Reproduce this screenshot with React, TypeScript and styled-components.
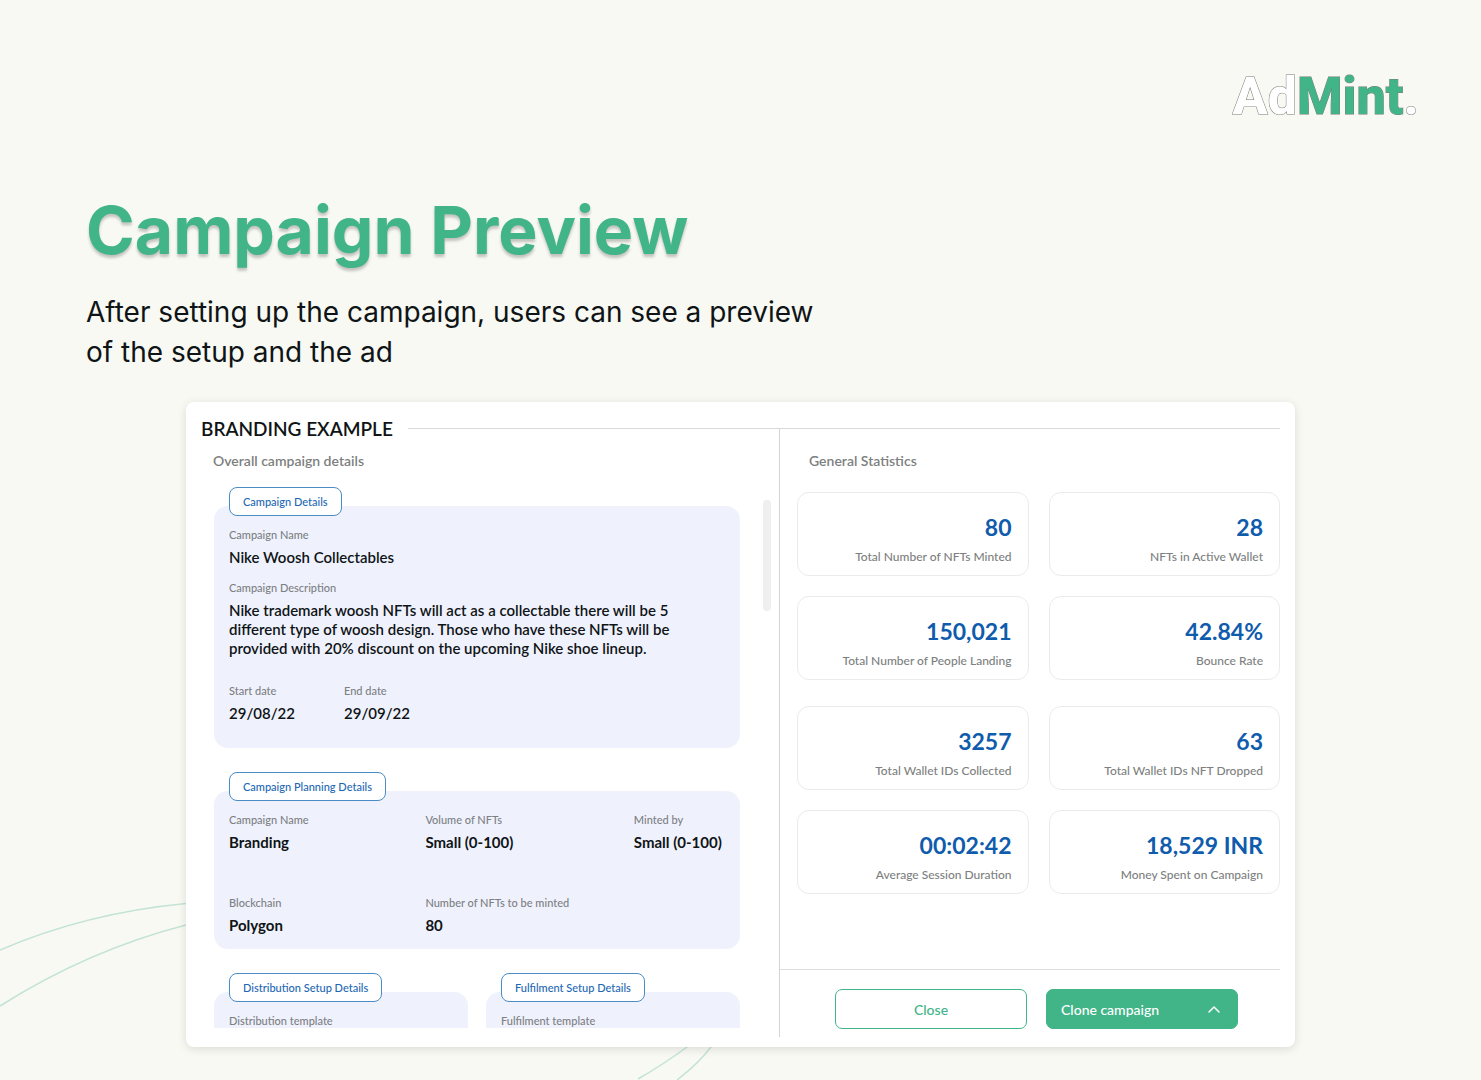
import React from "react";
import styled, { createGlobalStyle } from "styled-components";

const GlobalStyle = createGlobalStyle`
  *, *::before, *::after { box-sizing: border-box; }
  html, body { margin: 0; padding: 0; }
  body {
    background: #f8f9f3;
    color: #0f1416;
    font-family: Lato, "Open Sans", sans-serif;
  }
  h1, h2, h3, p, dl, dt, dd { margin: 0; padding: 0; font-weight: inherit; }
`;

const Page = styled.div`
  position: relative;
  min-height: 100vh;
  padding: 67px 0 32px;
  overflow: hidden;
`;

const Swirl = styled.svg`
  position: absolute;
  left: 0;
  bottom: 0;
  width: 740px;
  height: 200px;
  fill: none;
  stroke: #c3e3d5;
  stroke-width: 1.5;
`;

const Logo = styled.div`
  display: flex;
  justify-content: flex-end;
  align-items: baseline;
  padding: 0 62px;
  font-family: Roboto, Inter, sans-serif;
  font-size: 52px;
  line-height: 60px;
  font-weight: 800;
  paint-order: stroke fill;
  -webkit-text-stroke: 1px #777b78;
`;

const LogoPart = styled.span<{ $tint: string }>`
  color: ${(p) => p.$tint};
`;

const Intro = styled.header`
  padding: 61px 86px 0;
  font-family: Gilroy, Inter, sans-serif;
`;

const Title = styled.h1`
  color: #41b488;
  font-size: 66px;
  line-height: 84px;
  font-weight: 700;
  text-shadow: 0 3px 3px rgba(0, 0, 0, 0.22);
`;

const Lead = styled.p`
  max-width: 760px;
  margin-top: 20px;
  font-size: 28px;
  line-height: 40px;
`;

const Card = styled.main`
  position: relative;
  display: grid;
  grid-template-columns: 578fr 501fr;
  margin: 30px 186px 0;
  padding: 0 15px 10px;
  border-radius: 8px;
  background: #fff;
  box-shadow: 0 2px 10px rgba(0, 0, 0, 0.12);
`;

const Details = styled.section`
  min-width: 0;
  padding: 16px 0 9px;
`;

const CardHead = styled.div`
  display: flex;
  align-items: center;
  gap: 15px;
`;

const CardTitle = styled.h2`
  font-size: 19px;
  line-height: 21px;
  font-weight: 600;
  white-space: nowrap;
`;

const Rule = styled.span`
  flex: 1;
  height: 1px;
  background: #d9d9d9;
`;

const Subhead = styled.h3`
  padding: 13px 12px 0;
  color: #7d7f80;
  font-size: 14px;
  line-height: 18px;
  font-weight: 600;
`;

const Scroller = styled.div`
  display: flex;
  align-items: flex-start;
  justify-content: space-between;
  height: 541px;
  margin-top: 17px;
  padding: 0 8px 0 13px;
  overflow: hidden;
`;

const Sections = styled.div`
  display: flex;
  flex-direction: column;
  flex: 1;
  gap: 24px;
  margin-right: 23px;
`;

const Thumb = styled.span`
  width: 8px;
  height: 111px;
  margin-top: 13px;
  border-radius: 4px;
  background: #efefef;
`;

const Split = styled.div`
  display: grid;
  grid-template-columns: 1fr 1fr;
  gap: 18px;
`;

const Section = styled.section`
  display: flex;
  flex-direction: column;
  align-items: flex-start;
`;

const Tag = styled.h3`
  z-index: 1;
  height: 29px;
  margin: 0 0 -10px 15px;
  padding: 0 13px;
  border: 1px solid #4b8cc4;
  border-radius: 8px;
  background: #fff;
  color: #1d68b3;
  font-size: 11px;
  line-height: 27px;
  font-weight: 500;
`;

const Panel = styled.dl<{ $bottom: number }>`
  align-self: stretch;
  padding: 22px 15px ${(p) => p.$bottom}px;
  border-radius: 14px;
  background: #eff2fd;
`;

const FieldGrid = styled.div<{ $columns: string }>`
  display: grid;
  grid-template-columns: ${(p) => p.$columns};
  row-gap: 44px;
`;

const Stack = styled.div`
  display: grid;
  row-gap: 14px;
  margin-bottom: 26px;
`;

const Name = styled.dt`
  color: #7d8084;
  font-size: 11px;
  line-height: 14px;
  font-weight: 500;
  white-space: nowrap;
`;

const Value = styled.dd<{ $strong?: boolean }>`
  && { margin-top: 6px; }
  font-size: 15px;
  line-height: 19px;
  font-weight: ${(p) => (p.$strong ? 700 : 600)};
  white-space: ${(p) => (p.$strong ? "nowrap" : "normal")};
`;

const Stats = styled.section`
  display: flex;
  flex-direction: column;
  min-width: 0;
  margin-top: 26px;
  padding-top: 10px;
  border-top: 1px solid #d9d9d9;
  border-left: 1px solid #d4d4d4;
`;

const StatsHead = styled(Subhead)`
  padding: 13px 29px 0;
`;

const StatGroups = styled.div`
  display: grid;
  gap: 26px;
  margin-top: 22px;
  padding-left: 17px;
`;

const StatGrid = styled.div`
  display: grid;
  grid-template-columns: 1fr 1fr;
  gap: 20px;
`;

const Stat = styled.div`
  display: flex;
  flex-direction: column;
  height: 84px;
  padding: 20px 16px 0;
  border: 1px solid #ebebeb;
  border-radius: 12px;
  text-align: right;
`;

const StatValue = styled.strong`
  color: #0f5cad;
  font-size: 23px;
  line-height: 28px;
  font-weight: 700;
`;

const StatLabel = styled.span`
  margin-top: 7px;
  color: #7d7f80;
  font-size: 12px;
  line-height: 18px;
  font-weight: 500;
`;

const Actions = styled.div`
  display: grid;
  grid-template-columns: 1fr 1fr;
  gap: 19px;
  margin-top: auto;
  padding: 19px 42px 8px 55px;
  border-top: 1px solid #dedede;
`;

const Button = styled.button<{ $solid?: boolean }>`
  display: flex;
  align-items: center;
  justify-content: ${(p) => (p.$solid ? "space-between" : "center")};
  height: 40px;
  padding: 0 14px;
  border: 1px solid #41b488;
  border-radius: 7px;
  background: ${(p) => (p.$solid ? "#41b488" : "#fff")};
  color: ${(p) => (p.$solid ? "#fff" : "#41b488")};
  font-family: inherit;
  font-size: 14px;
  font-weight: 500;
  cursor: pointer;
`;

const Caret = styled.svg`
  width: 18px;
  height: 18px;
  fill: none;
  stroke: currentColor;
  stroke-width: 1.5;
  stroke-linecap: round;
  stroke-linejoin: round;
`;

type FieldProps = { name: string; value?: string; strong?: boolean };

const Field = ({ name, value, strong }: FieldProps) => (
  <div>
    <Name>{name}</Name>
    {value && <Value $strong={strong}>{value}</Value>}
  </div>
);

const planning: FieldProps[] = [
  { name: "Campaign Name", value: "Branding" },
  { name: "Volume of NFTs", value: "Small (0-100)" },
  { name: "Minted by", value: "Small (0-100)" },
  { name: "Blockchain", value: "Polygon" },
  { name: "Number of NFTs to be minted", value: "80" },
];

const setups = [
  { tag: "Distribution Setup Details", name: "Distribution template" },
  { tag: "Fulfilment Setup Details", name: "Fulfilment template" },
];

const statGroups = [
  [
    ["80", "Total Number of NFTs Minted"],
    ["28", "NFTs in Active Wallet"],
    ["150,021", "Total Number of People Landing"],
    ["42.84%", "Bounce Rate"],
  ],
  [
    ["3257", "Total Wallet IDs Collected"],
    ["63", "Total Wallet IDs NFT Dropped"],
    ["00:02:42", "Average Session Duration"],
    ["18,529 INR", "Money Spent on Campaign"],
  ],
];

export default function App() {
  return (
    <Page>
      <GlobalStyle />
      <Swirl viewBox="0 0 740 200" aria-hidden="true">
        <path d="M0 70C58 45 118 30 186 23.500C400 5 800 60 711 167Q698 184 677 200" />
        <path d="M0 126C60 88 120 62 186 45C400 -10 900 20 687 167Q664 184 638 199" />
      </Swirl>
      <Logo>
        <LogoPart $tint="#fff">Ad</LogoPart>
        <LogoPart $tint="#41b488">Mint</LogoPart>
        <LogoPart $tint="#fff">.</LogoPart>
      </Logo>
      <Intro>
        <Title>Campaign Preview</Title>
        <Lead>
          After setting up the campaign, users can see a preview
          <br />
          of the setup and the ad
        </Lead>
      </Intro>
      <Card>
        <Details>
          <CardHead>
            <CardTitle>BRANDING EXAMPLE</CardTitle>
            <Rule />
          </CardHead>
          <Subhead>Overall campaign details</Subhead>
          <Scroller>
            <Sections>
              <Section>
                <Tag>Campaign Details</Tag>
                <Panel $bottom={25}>
                  <Stack>
                    <Field name="Campaign Name" value="Nike Woosh Collectables" />
                    <Field
                      name="Campaign Description"
                      value="Nike trademark woosh NFTs will act as a collectable there will be 5 different type of woosh design. Those who have these NFTs will be provided with 20% discount on the upcoming Nike shoe lineup."
                    />
                  </Stack>
                  <FieldGrid $columns="115px 1fr">
                    <Field name="Start date" value="29/08/22" />
                    <Field name="End date" value="29/09/22" />
                  </FieldGrid>
                </Panel>
              </Section>
              <Section>
                <Tag>Campaign Planning Details</Tag>
                <Panel $bottom={14}>
                  <FieldGrid $columns="196fr 208fr 91fr">
                    {planning.map((f, i) => (
                      <Field key={i} {...f} strong />
                    ))}
                  </FieldGrid>
                </Panel>
              </Section>
              <Split>
                {setups.map((s) => (
                  <Section key={s.tag}>
                    <Tag>{s.tag}</Tag>
                    <Panel $bottom={60}>
                      <Field name={s.name} />
                    </Panel>
                  </Section>
                ))}
              </Split>
            </Sections>
            <Thumb />
          </Scroller>
        </Details>
        <Stats>
          <StatsHead>General Statistics</StatsHead>
          <StatGroups>
            {statGroups.map((group, i) => (
              <StatGrid key={i}>
                {group.map(([value, label]) => (
                  <Stat key={label}>
                    <StatValue>{value}</StatValue>
                    <StatLabel>{label}</StatLabel>
                  </Stat>
                ))}
              </StatGrid>
            ))}
          </StatGroups>
          <Actions>
            <Button type="button">Close</Button>
            <Button type="button" $solid>
              Clone campaign
              <Caret viewBox="0 0 18 18" aria-hidden="true">
                <path d="M4 12L9 7L14 12" />
              </Caret>
            </Button>
          </Actions>
        </Stats>
      </Card>
    </Page>
  );
}
